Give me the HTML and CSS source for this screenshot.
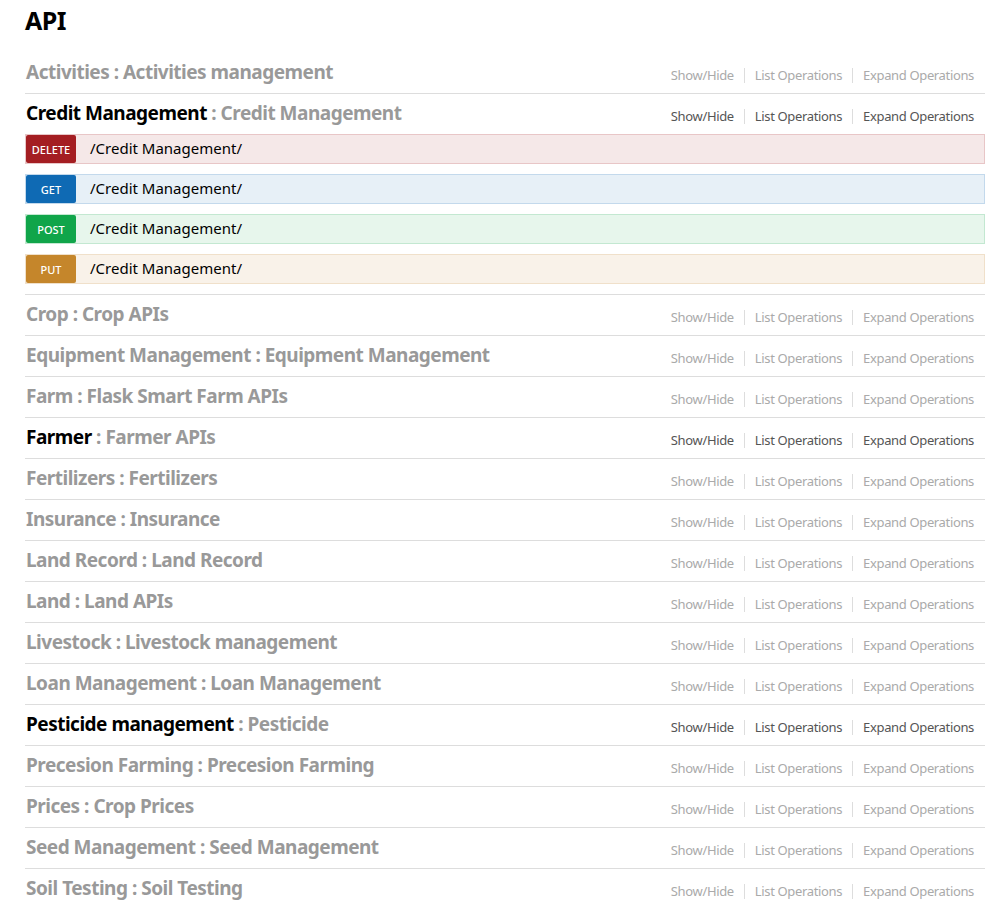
FILE: index.html
```html
<!DOCTYPE html>
<html>
<head>
<meta charset="utf-8">
<title>API</title>
<link rel="stylesheet" href="styles.css">
</head>
<body>
<div class="wrap">
  <h1 class="title">API</h1>
  <ul class="resources">
    <li class="resource">
      <div class="heading">
        <h2><span class="name">Activities</span> : Activities management</h2>
        <ul class="options"><li>Show/Hide</li><li>List Operations</li><li>Expand Operations</li></ul>
      </div>
    </li>
    <li class="resource active">
      <div class="heading">
        <h2><span class="name">Credit Management</span> : Credit Management</h2>
        <ul class="options"><li>Show/Hide</li><li>List Operations</li><li>Expand Operations</li></ul>
      </div>
      <ul class="operations">
        <li class="op delete"><span class="method">DELETE</span><span class="path">/Credit Management/</span></li>
        <li class="op get"><span class="method">GET</span><span class="path">/Credit Management/</span></li>
        <li class="op post"><span class="method">POST</span><span class="path">/Credit Management/</span></li>
        <li class="op put"><span class="method">PUT</span><span class="path">/Credit Management/</span></li>
      </ul>
    </li>
    <li class="resource">
      <div class="heading">
        <h2><span class="name">Crop</span> : Crop APIs</h2>
        <ul class="options"><li>Show/Hide</li><li>List Operations</li><li>Expand Operations</li></ul>
      </div>
    </li>
    <li class="resource">
      <div class="heading">
        <h2><span class="name">Equipment Management</span> : Equipment Management</h2>
        <ul class="options"><li>Show/Hide</li><li>List Operations</li><li>Expand Operations</li></ul>
      </div>
    </li>
    <li class="resource">
      <div class="heading">
        <h2><span class="name">Farm</span> : Flask Smart Farm APIs</h2>
        <ul class="options"><li>Show/Hide</li><li>List Operations</li><li>Expand Operations</li></ul>
      </div>
    </li>
    <li class="resource active">
      <div class="heading">
        <h2><span class="name">Farmer</span> : Farmer APIs</h2>
        <ul class="options"><li>Show/Hide</li><li>List Operations</li><li>Expand Operations</li></ul>
      </div>
    </li>
    <li class="resource">
      <div class="heading">
        <h2><span class="name">Fertilizers</span> : Fertilizers</h2>
        <ul class="options"><li>Show/Hide</li><li>List Operations</li><li>Expand Operations</li></ul>
      </div>
    </li>
    <li class="resource">
      <div class="heading">
        <h2><span class="name">Insurance</span> : Insurance</h2>
        <ul class="options"><li>Show/Hide</li><li>List Operations</li><li>Expand Operations</li></ul>
      </div>
    </li>
    <li class="resource">
      <div class="heading">
        <h2><span class="name">Land Record</span> : Land Record</h2>
        <ul class="options"><li>Show/Hide</li><li>List Operations</li><li>Expand Operations</li></ul>
      </div>
    </li>
    <li class="resource">
      <div class="heading">
        <h2><span class="name">Land</span> : Land APIs</h2>
        <ul class="options"><li>Show/Hide</li><li>List Operations</li><li>Expand Operations</li></ul>
      </div>
    </li>
    <li class="resource">
      <div class="heading">
        <h2><span class="name">Livestock</span> : Livestock management</h2>
        <ul class="options"><li>Show/Hide</li><li>List Operations</li><li>Expand Operations</li></ul>
      </div>
    </li>
    <li class="resource">
      <div class="heading">
        <h2><span class="name">Loan Management</span> : Loan Management</h2>
        <ul class="options"><li>Show/Hide</li><li>List Operations</li><li>Expand Operations</li></ul>
      </div>
    </li>
    <li class="resource active">
      <div class="heading">
        <h2><span class="name">Pesticide management</span> : Pesticide</h2>
        <ul class="options"><li>Show/Hide</li><li>List Operations</li><li>Expand Operations</li></ul>
      </div>
    </li>
    <li class="resource">
      <div class="heading">
        <h2><span class="name">Precesion Farming</span> : Precesion Farming</h2>
        <ul class="options"><li>Show/Hide</li><li>List Operations</li><li>Expand Operations</li></ul>
      </div>
    </li>
    <li class="resource">
      <div class="heading">
        <h2><span class="name">Prices</span> : Crop Prices</h2>
        <ul class="options"><li>Show/Hide</li><li>List Operations</li><li>Expand Operations</li></ul>
      </div>
    </li>
    <li class="resource">
      <div class="heading">
        <h2><span class="name">Seed Management</span> : Seed Management</h2>
        <ul class="options"><li>Show/Hide</li><li>List Operations</li><li>Expand Operations</li></ul>
      </div>
    </li>
    <li class="resource">
      <div class="heading">
        <h2><span class="name">Soil Testing</span> : Soil Testing</h2>
        <ul class="options"><li>Show/Hide</li><li>List Operations</li><li>Expand Operations</li></ul>
      </div>
    </li>
  </ul>
</div>
</body>
</html>
```
FILE: styles.css
```css
html, body {
  margin: 0;
  padding: 0;
  background: #fff;
}
body {
  font-family: "Noto Sans", "Open Sans", sans-serif;
  color: #000;
}
.wrap {
  width: 960px;
  margin-left: 25px;
}
.title {
  margin: 0;
  padding-top: 5px;
  height: 48px;
  font-size: 25px;
  line-height: 30px;
  font-weight: bold;
  letter-spacing: -0.6px;
  color: #000;
}
.resources {
  list-style: none;
  margin: 0;
  padding: 0;
}
.resource {
  border-bottom: 1px solid #ddd;
}
.resource:last-child {
  border-bottom: none;
}
.heading {
  height: 40px;
  display: flex;
  align-items: center;
  justify-content: space-between;
}
.heading h2 {
  margin: 0;
  padding: 0 0 2px 1px;
  font-size: 19px;
  line-height: 24px;
  font-weight: bold;
  letter-spacing: -0.5px;
  color: #999;
  white-space: nowrap;
}
.resource.active .name {
  color: #000;
}
.options {
  list-style: none;
  margin: 0 1px 0 0;
  padding: 4px 0 0 0;
  display: flex;
}
.options li {
  font-size: 13px;
  line-height: 15px;
  letter-spacing: -0.35px;
  color: #aaa;
  padding: 0 10px;
  border-right: 1px solid #ddd;
}
.options li:last-child {
  border-right: none;
}
.resource.active .options li {
  color: #555;
}
.operations {
  list-style: none;
  margin: 0;
  padding: 0 0 10px 0;
  display: flex;
  flex-direction: column;
  gap: 10px;
}
.op {
  display: flex;
  align-items: stretch;
  height: 28px;
  border: 1px solid;
}
.method {
  width: 50px;
  border-radius: 2px;
  color: #fff;
  font-size: 11px;
  font-weight: 500;
  text-align: center;
  line-height: 30px;
  height: 28px;
  text-transform: uppercase;
}
.path {
  padding-left: 14px;
  font-size: 15px;
  line-height: 26px;
  color: #000;
}
.op.delete { background: #f5e8e8; border-color: #e8c6c7; }
.op.delete .method { background: #a41e22; }
.op.get { background: #e7f0f7; border-color: #c3d9ec; }
.op.get .method { background: #0f6ab4; }
.op.post { background: #e7f6ec; border-color: #c3e8d1; }
.op.post .method { background: #10a54a; }
.op.put { background: #f9f2e9; border-color: #f0e0ca; }
.op.put .method { background: #c5862b; }
```
